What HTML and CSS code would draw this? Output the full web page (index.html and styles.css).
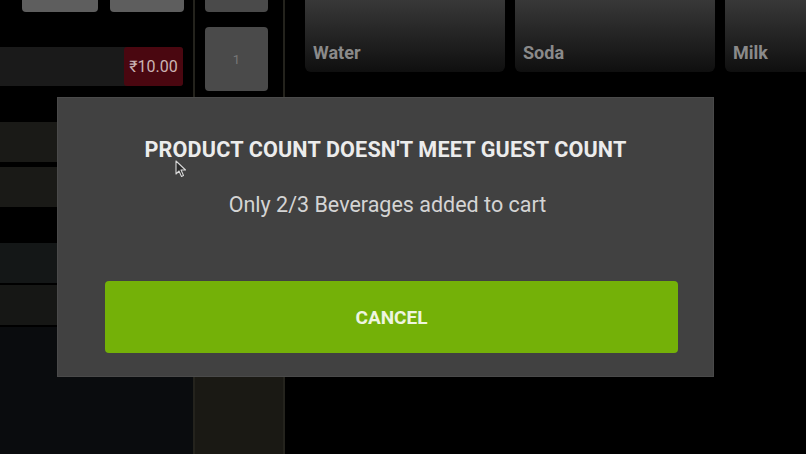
FILE: index.html
```html
<!DOCTYPE html>
<html>
<head>
<meta charset="utf-8">
<link rel="stylesheet" href="styles.css">
</head>
<body>
<div class="screen">
  <div class="left">
    <div class="topbtns"><div class="tb tb1"></div><div class="tb tb2"></div></div>
    <div class="cartrow"><div class="cartname"></div><div class="price">₹10.00</div></div>
    <div class="rows">
      <div class="row r1"></div>
      <div class="row r2"></div>
      <div class="gap"></div>
      <div class="row r3"></div>
      <div class="row r4"></div>
    </div>
    <div class="leftfill"></div>
  </div>
  <div class="mid">
    <div class="qb qb1"></div>
    <div class="qb qb2">1</div>
    <div class="midfill"></div>
  </div>
  <div class="right">
    <div class="tile"><span>Water</span></div>
    <div class="tile"><span>Soda</span></div>
    <div class="tile"><span>Milk</span></div>
  </div>
  <div class="dialog">
    <div class="title">PRODUCT COUNT DOESN'T MEET GUEST COUNT</div>
    <div class="msg">Only 2/3 Beverages added to cart</div>
    <div class="btn">CANCEL</div>
  </div>
  <svg class="cursor" width="12" height="18" viewBox="0 0 12 18"><path d="M1 1 L1 14 L4 11 L6.5 16.5 L8.5 15.5 L6 10 L10.5 10 Z" fill="#2a2a2a" stroke="#d8d8d8" stroke-width="1.1" stroke-linejoin="round"/></svg>
</div>
</body>
</html>
```
FILE: styles.css
```css
html, body { margin: 0; padding: 0; background: #000; }
body { font-family: Roboto, "Liberation Sans", sans-serif; }
.screen { position: relative; width: 806px; height: 454px; overflow: hidden; display: grid; grid-template-columns: 195px 90px 1fr; background: #000; }

.left { display: flex; flex-direction: column; border-right: 2px solid #24231d; }
.topbtns { display: flex; gap: 12px; padding-left: 22px; height: 12px; }
.tb { height: 12px; background: #5e5e5e; border-radius: 0 0 4px 4px; }
.tb1 { width: 76px; }
.tb2 { width: 74px; }
.cartrow { margin-top: 35px; margin-right: 10px; height: 39px; display: flex; background: #1a1a1a; border-radius: 0 4px 4px 0; }
.cartname { flex: 1; }
.price { width: 59px; background: #4a0710; color: #cbb4b4; font-size: 16px; display: flex; align-items: center; justify-content: center; border-radius: 3px; }
.rows { margin-top: 36px; margin-right: 10px; display: flex; flex-direction: column; }
.row { height: 40px; background: #1a1a17; }
.r1 { margin-bottom: 5px; }
.gap { height: 36px; }
.r3 { background: #141717; margin-bottom: 2px; }
.r4 { background: #161715; }
.leftfill { flex: 1; margin-top: 2px; background: #0a0c0e; }

.mid { display: flex; flex-direction: column; border-right: 2px solid #24231d; }
.qb { margin-left: 10px; width: 63px; background: #4a4a4a; color: #777; font-size: 13px; display: flex; align-items: center; justify-content: center; }
.qb1 { height: 12px; border-radius: 0 0 4px 4px; }
.qb2 { height: 64px; margin-top: 15px; border-radius: 4px; }
.midfill { flex: 1; margin-top: 10px; background: #1a1914; }

.right { display: flex; gap: 10px; padding-left: 20px; align-items: flex-start; }
.tile { flex: 0 0 200px; height: 72px; border-radius: 0 0 6px 6px; background: linear-gradient(#383838, #0f0f0f); display: flex; align-items: flex-end; padding: 0 0 9px 8px; box-sizing: border-box; }
.tile span { color: #8a8a8a; font-weight: bold; font-size: 18px; }

.dialog { position: absolute; left: 57px; top: 97px; width: 657px; height: 280px; box-sizing: border-box; background: #414141; border: 1px solid #4a4a4a; display: flex; flex-direction: column; align-items: center; }
.title { margin-top: 39px; color: #ececec; font-weight: bold; font-size: 21.6px; line-height: 25px; letter-spacing: 0.15px; }
.msg { margin-top: 30px; padding-left: 4px; color: #d4d4d4; font-size: 21.5px; line-height: 25px; }
.btn { margin-top: 64px; align-self: flex-start; margin-left: 47px; width: 573px; height: 72px; background: #74b108; border-radius: 4px; color: #eef5e0; font-weight: bold; font-size: 19px; display: flex; align-items: center; justify-content: center; }

.cursor { position: absolute; left: 175px; top: 160px; }
```
